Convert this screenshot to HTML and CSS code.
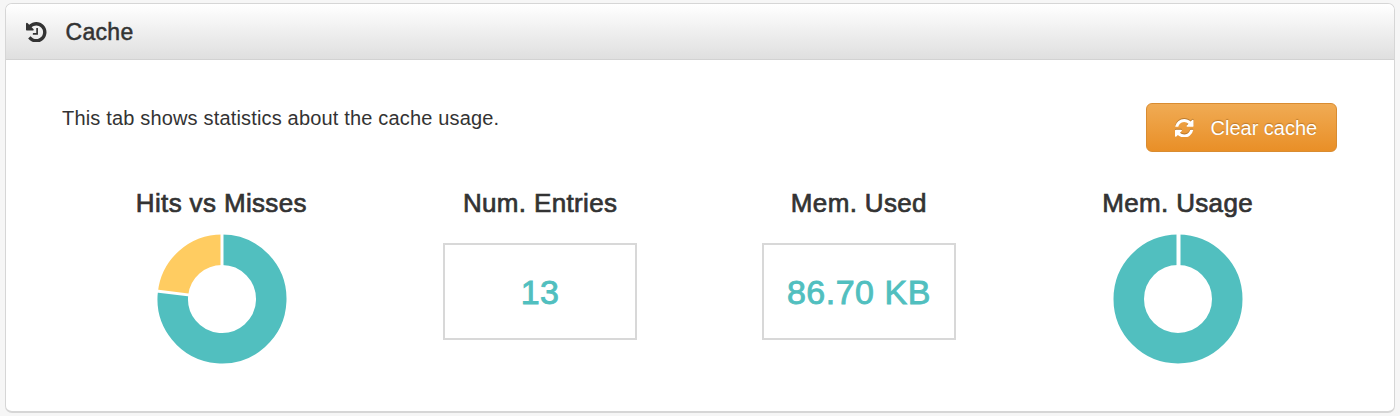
FILE: index.html
```html
<!DOCTYPE html>
<html lang="en">
<head>
<meta charset="utf-8">
<title>Cache</title>
<link rel="stylesheet" href="styles.css">
</head>
<body>
<section class="panel">
  <header class="panel-header">
    <svg class="history-icon" viewBox="0 0 1536 1536"><path transform="translate(0 1408) scale(1 -1)" d="M1536 640q0 -156 -61 -298t-164 -245t-245 -164t-298 -61q-172 0 -327 72.5t-264 204.5q-7 10 -6.5 22.5t8.5 20.5l137 138q10 9 25 9q16 -2 23 -12q73 -95 179 -147t225 -52q104 0 198.5 40.5t163.5 109.5t109.5 163.5t40.5 198.5t-40.5 198.5t-109.5 163.5t-163.5 109.5t-198.5 40.5q-98 0 -188 -35.5t-160 -101.5l137 -138q31 -30 14 -69q-17 -40 -59 -40h-448q-26 0 -45 19t-19 45v448q0 42 40 59q39 17 69 -14l130 -129q107 101 244.5 156.5t284.5 55.5q156 0 298 -61t245 -164t164 -245t61 -298zM896 928v-448q0 -14 -9 -23t-23 -9h-320q-14 0 -23 9t-9 23v64q0 14 9 23t23 9h224v352q0 14 9 23t23 9h64q14 0 23 -9t9 -23z"/></svg>
    <h1 class="panel-title">Cache</h1>
  </header>
  <div class="panel-body">
    <div class="intro">
      <p class="intro-text">This tab shows statistics about the cache usage.</p>
      <button class="clear-button" type="button">
        <svg class="refresh-icon" viewBox="0 0 1536 1536"><path transform="translate(0 1408) scale(1 -1)" d="M1511 480q0 -5 -1 -7q-64 -268 -268 -434.5t-478 -166.5q-146 0 -282.5 55t-243.5 157l-129 -129q-19 -19 -45 -19t-45 19t-19 45v448q0 26 19 45t45 19h448q26 0 45 -19t19 -45t-19 -45l-137 -137q71 -66 161 -102t187 -36q134 0 250 65t186 179q11 17 53 117q8 23 30 23h192q13 0 22.5 -9.5t9.5 -22.5zM1536 1280v-448q0 -26 -19 -45t-45 -19h-448q-26 0 -45 19t-19 45t19 45l138 138q-148 137 -349 137q-134 0 -250 -65t-186 -179q-11 -17 -53 -117q-8 -23 -30 -23h-199q-13 0 -22.5 9.5t-9.5 22.5v7q65 268 270 434.5t480 166.5q146 0 284 -55.5t245 -156.5l130 129q19 19 45 19t45 -19t19 -45z"/></svg>
        <span class="clear-label">Clear cache</span>
      </button>
    </div>
    <div class="stats">
      <div class="stat">
        <h2 class="stat-title">Hits vs Misses</h2>
        <svg class="donut hits-donut" viewBox="-66 -66 132 132">
          <path class="ring used" d="M0 -49.25A49.25 49.25 0 1 1 -48.89 -5.94"/>
          <path class="ring misses" d="M-48.89 -5.94A49.25 49.25 0 0 1 0 -49.25"/>
          <path class="gap" d="M0 -30V-66M-29.8 -3.62L-65.5 -7.96"/>
        </svg>
      </div>
      <div class="stat">
        <h2 class="stat-title">Num. Entries</h2>
        <div class="value-box"><span class="value">13</span></div>
      </div>
      <div class="stat">
        <h2 class="stat-title">Mem. Used</h2>
        <div class="value-box"><span class="value">86.70 KB</span></div>
      </div>
      <div class="stat">
        <h2 class="stat-title">Mem. Usage</h2>
        <svg class="donut" viewBox="-66 -66 132 132">
          <circle class="ring used" r="49.25"/>
          <path class="gap wide" d="M0.5 -30V-66"/>
        </svg>
      </div>
    </div>
  </div>
</section>
</body>
</html>
```
FILE: styles.css
```css
* { box-sizing: border-box; }
body {
  margin: 0;
  padding: 3px 5px;
  height: 416px;
  background: #f6f6f6;
  color: #333;
  font-family: "Liberation Sans", Arial, sans-serif;
}
.panel {
  height: 410px;
  background: #fff;
  border: 1.5px solid #d6d6d6;
  border-bottom-width: 2px;
  border-radius: 7px;
  overflow: hidden;
}
.panel-header {
  display: flex;
  align-items: center;
  height: 56px;
  padding-left: 20px;
  background: linear-gradient(#fff, #dfdfdf);
  border-bottom: 1px solid #d2d2d2;
}
.history-icon { width: 20.5px; height: 20.5px; margin-top: 1px; fill: #333; }
.panel-title {
  margin: 0 0 0 19px;
  font-size: 23px;
  font-weight: 400;
  line-height: 28px;
  letter-spacing: 0.3px;
  -webkit-text-stroke: 0.5px #333;
}
.panel-body { padding: 43px 57px 0 56px; }
.intro {
  display: flex;
  justify-content: space-between;
  height: 84px;
}
.intro-text {
  margin: 3px 0 0;
  font-size: 20px;
  line-height: 24px;
  letter-spacing: 0.17px;
}
.clear-button {
  display: flex;
  align-items: center;
  width: 191px;
  height: 49px;
  padding: 1px 0 0 28px;
  background: linear-gradient(#f0ab54, #e98f27);
  border: 1.5px solid #d98c31;
  border-radius: 6px;
  color: #fff;
  font: inherit;
}
.refresh-icon {
  width: 18.5px;
  height: 18.5px;
  fill: #fff;
  filter: drop-shadow(0 -1px 0 rgba(90, 50, 0, 0.35));
}
.clear-label {
  margin-left: 17px;
  font-size: 20px;
  white-space: nowrap;
  text-shadow: 0 -1px 1px rgba(90, 50, 0, 0.35);
}
.stats {
  display: grid;
  grid-template-columns: repeat(4, 1fr);
}
.stat {
  display: flex;
  flex-direction: column;
  align-items: center;
}
.stat-title {
  margin: 0;
  font-size: 26px;
  font-weight: 400;
  line-height: 32px;
  letter-spacing: 0.35px;
  white-space: nowrap;
  -webkit-text-stroke: 0.7px #333;
}
.donut { width: 132px; height: 132px; margin-top: 14px; }
.hits-donut { margin-left: 2px; }
.ring { fill: none; stroke-width: 30.5; }
.used { stroke: #51bfbf; }
.misses { stroke: #ffcc61; }
.gap { fill: none; stroke: #fff; stroke-width: 3; }
.wide { stroke-width: 4; }
.value-box {
  display: flex;
  align-items: center;
  justify-content: center;
  width: 194px;
  height: 97px;
  margin-top: 24px;
  border: 2px solid #d8d8d8;
}
.value {
  color: #51bfbf;
  font-size: 34px;
  line-height: 40px;
  letter-spacing: 0.5px;
  white-space: nowrap;
  -webkit-text-stroke: 0.9px #51bfbf;
}
```
